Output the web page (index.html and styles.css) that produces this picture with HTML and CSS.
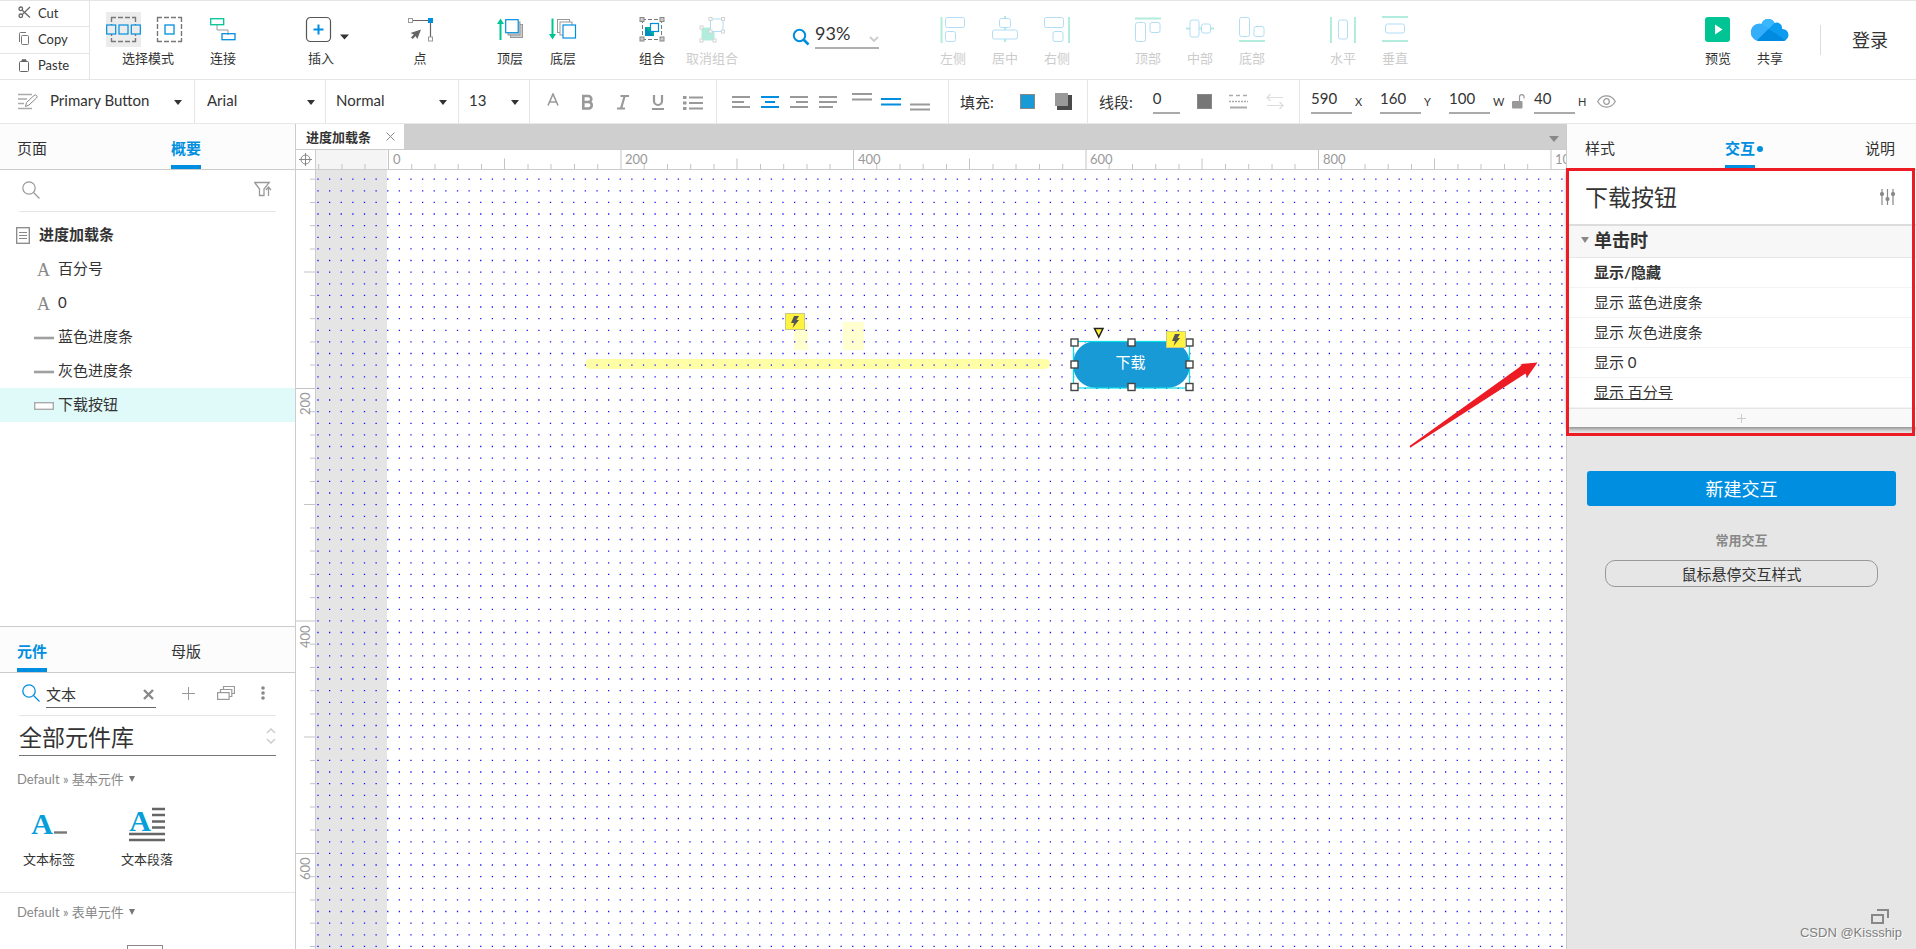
FILE: index.html
```html
<!DOCTYPE html>
<html lang="zh-CN">
<head>
<meta charset="utf-8">
<title>进度加载条</title>
<link rel="stylesheet" href="styles.css">
</head>
<body>
<div class="app">
  <header class="toolbar">
    <div class="clipboard">
      <button class="clip"><svg width="13" height="13" viewBox="0 0 13 13" fill="none" stroke="#666" stroke-width="1.3"><circle cx="2.8" cy="2.8" r="1.8"/><circle cx="2.8" cy="9.8" r="1.8"/><path d="M4.2 4.2 12 11.5M4.2 8.6 12 1"/></svg><span>Cut</span></button>
      <button class="clip"><svg width="13" height="13" viewBox="0 0 13 13" fill="none" stroke="#777"><path d="M1.5 10V1.5a1 1 0 0 1 1-1H8"/><rect x="3.5" y="3.5" width="7" height="9" rx="1"/></svg><span>Copy</span></button>
      <button class="clip"><svg width="13" height="13" viewBox="0 0 13 13" fill="none" stroke="#666"><rect x="1.5" y="2.5" width="9" height="10" rx="1"/><path d="M4 2.5V.8h4v1.7z" fill="#666"/></svg><span>Paste</span></button>
    </div>
    <button class="tool tool-select">
      <span class="mode-pair">
        <svg class="mode-active" width="35" height="35" viewBox="0 0 35 35" fill="none"><path d="M5 5.500h25M5 29.500h25M5.500 5v25M29.500 5v25" stroke="#777" stroke-width="1.400" stroke-dasharray="5 2"/><g stroke="#008fe0" fill="#ececec" stroke-width="1.200"><rect x=".7" y="13" width="9" height="9"/><rect x="13" y="13" width="9" height="9"/><rect x="25.300" y="13" width="9" height="9"/></g></svg>
        <svg width="35" height="35" viewBox="0 0 35 35" fill="none"><path d="M5 5.500h25M5 29.500h25M5.500 5v25M29.500 5v25" stroke="#777" stroke-width="1.400" stroke-dasharray="5 2"/><rect x="13" y="13" width="9" height="9" stroke="#008fe0" stroke-width="1.300"/></svg>
      </span>
      <span>选择模式</span>
    </button>
    <button class="tool tool-connect"><svg width="26" height="35" viewBox="0 0 26 35" fill="none"><path d="M7 13v5h11v5" stroke="#999"/><rect x=".7" y="6.700" width="13" height="6" stroke="#00c493" stroke-width="1.300"/><rect x="12" y="21.700" width="13" height="6" stroke="#008fe0" stroke-width="1.300"/></svg><span>连接</span></button>
    <button class="tool tool-insert"><svg width="58" height="35" viewBox="0 0 58 35" fill="none"><rect x="14.500" y="5.500" width="24" height="24" rx="4" stroke="#555" stroke-width="1.200"/><path d="M26.500 12.500v10M21.500 17.500h10" stroke="#008fe0" stroke-width="2"/><path d="M48 22.500h9l-4.500 5z" fill="#333"/></svg><span>插入</span></button>
    <button class="tool tool-point"><svg width="27" height="35" viewBox="0 0 27 35" fill="none"><path d="M5 8.500h18.500V26" stroke="#666" stroke-width="1.200"/><rect x="1.500" y="6.500" width="4" height="4" stroke="#999" fill="#fff"/><rect x="21.500" y="25" width="4" height="4" stroke="#999" fill="#fff"/><rect x="21" y="6" width="5" height="5" fill="#008fe0"/><path d="M14 17.500 3.500 21l3.300 1.600L4 25.500 5.800 27l2.700-3 1.800 3z" fill="#666"/></svg><span>点</span></button>
    <button class="tool tool-front"><svg width="27" height="35" viewBox="0 0 27 35"><path d="M3.500 28V10" stroke="#00c493" stroke-width="2"/><path d="M0 12 3.500 6.500 7 12z" fill="#00c493"/><rect x="13.500" y="12.500" width="12" height="13" fill="#ccc" stroke="#999"/><rect x="11" y="10" width="12" height="13" fill="#ccc" stroke="#999"/><rect x="8.700" y="7.700" width="12.500" height="13" fill="#fff" stroke="#008fe0" stroke-width="1.200"/></svg><span>顶层</span></button>
    <button class="tool tool-back"><svg width="28" height="35" viewBox="0 0 28 35"><path d="M3.500 6.500V24" stroke="#00c493" stroke-width="2"/><path d="M0 22 3.500 27.500 7 22z" fill="#00c493"/><rect x="8.500" y="7.500" width="12" height="13" fill="#fff" stroke="#999"/><rect x="11" y="10" width="12" height="13" fill="#fff" stroke="#999"/><rect x="14" y="13" width="12.500" height="13" fill="#fff" stroke="#008fe0" stroke-width="1.200"/></svg><span>底层</span></button>
    <button class="tool tool-group"><svg width="26" height="35" viewBox="0 0 26 35" fill="none"><path d="M3 7.500h20M3 27.500h20M3.500 7v20M22.500 7v20" stroke="#777" stroke-dasharray="4 2"/><g fill="#ccc" stroke="#888"><rect x="1" y="5.500" width="4" height="4"/><rect x="21" y="5.500" width="4" height="4"/><rect x="1" y="25" width="4" height="4"/><rect x="21" y="25" width="4" height="4"/></g><rect x="6" y="15" width="9" height="9" fill="#00b48f"/><path d="M6 24h9l-9-9z" fill="#008fc0"/><rect x="11.500" y="11.500" width="8" height="8" fill="#fff" stroke="#008fe0" stroke-width="1.200"/></svg><span>组合</span></button>
    <button class="tool tool-ungroup" disabled><svg width="26" height="35" viewBox="0 0 26 35" fill="none"><rect x="2.500" y="15.500" width="13" height="13" fill="#b2ecdd"/><rect x="11.500" y="7" width="12.500" height="12.500" fill="#fff" stroke="#b2ddf6"/><g fill="#fff" stroke="#d4d4d4"><rect x="10" y="5.500" width="3" height="3"/><rect x="22.500" y="5.500" width="3" height="3"/><rect x="22.500" y="18" width="3" height="3"/><rect x="10" y="18" width="3" height="3"/><rect x="1" y="14" width="3" height="3"/><rect x="1" y="27" width="3" height="3"/><rect x="14" y="27" width="3" height="3"/></g></svg><span>取消组合</span></button>
    <label class="zoom"><svg width="18" height="18" viewBox="0 0 18 18" fill="none" stroke="#008fe0"><circle cx="7.500" cy="7.500" r="5.700" stroke-width="2"/><path d="m11.500 11.500 5 5" stroke-width="2.600"/></svg>
      <span class="zoom-field"><input class="zoom-input" value="93%" aria-label="缩放"><svg width="10" height="6" viewBox="0 0 10 6" fill="none" stroke="#ccc" stroke-width="1.800"><path d="m1 1 4 4 4-4"/></svg></span></label>
    <div class="tool-set set-align-x">
      <button class="tool" disabled><svg width="26" height="35" viewBox="0 0 26 35" fill="none" stroke="#b2ddf6"><path d="M1.500 5v26" stroke="#b2ecdd" stroke-width="2"/><rect x="5.500" y="5.500" width="19" height="10" rx="2"/><rect x="5.500" y="19.500" width="10" height="10" rx="2"/></svg><span>左侧</span></button>
      <button class="tool" disabled><svg width="26" height="35" viewBox="0 0 26 35" fill="none" stroke="#b2ddf6"><path d="M13 4v3M13 15v3M13 27v3" stroke="#b2ecdd" stroke-width="2"/><rect x="7.500" y="6.500" width="11" height="9" rx="2"/><rect x=".5" y="18" width="25" height="9" rx="2"/></svg><span>居中</span></button>
      <button class="tool" disabled><svg width="26" height="35" viewBox="0 0 26 35" fill="none" stroke="#b2ddf6"><path d="M25 5v26" stroke="#b2ecdd" stroke-width="2"/><rect x=".5" y="5.500" width="19" height="10" rx="2"/><rect x="9" y="19.500" width="10" height="10" rx="2"/></svg><span>右侧</span></button>
    </div>
    <div class="tool-set">
      <button class="tool" disabled><svg width="26" height="35" viewBox="0 0 26 35" fill="none" stroke="#b2ddf6"><path d="M0 6.500h26" stroke="#b2ecdd" stroke-width="2"/><rect x=".5" y="10.500" width="10" height="19" rx="2"/><rect x="15" y="10.500" width="10" height="10" rx="2"/></svg><span>顶部</span></button>
      <button class="tool" disabled><svg width="28" height="35" viewBox="0 0 28 35" fill="none" stroke="#b2ddf6"><path d="M0 16.500h4M13 16.500h3M25 16.500h3" stroke="#b2ecdd" stroke-width="2"/><rect x="4" y="8" width="9" height="17" rx="2"/><rect x="15.500" y="12" width="9" height="9" rx="2"/></svg><span>中部</span></button>
      <button class="tool" disabled><svg width="26" height="35" viewBox="0 0 26 35" fill="none" stroke="#b2ddf6"><path d="M0 29h26" stroke="#b2ecdd" stroke-width="2"/><rect x=".5" y="5.500" width="10" height="19" rx="2"/><rect x="15" y="14.500" width="10" height="10" rx="2"/></svg><span>底部</span></button>
    </div>
    <div class="tool-set">
      <button class="tool" disabled><svg width="28" height="35" viewBox="0 0 28 35" fill="none" stroke="#b2ddf6"><path d="M2 5v26M26 5v26" stroke="#b2ecdd" stroke-width="2"/><rect x="9.500" y="8" width="9" height="19" rx="2"/></svg><span>水平</span></button>
      <button class="tool" disabled><svg width="26" height="35" viewBox="0 0 26 35" fill="none" stroke="#b2ddf6"><path d="M0 5h26M0 29h26" stroke="#b2ecdd" stroke-width="2"/><rect x="3.500" y="12" width="19" height="9" rx="2"/></svg><span>垂直</span></button>
    </div>
    <div class="account">
      <button class="tool"><svg width="26" height="35" viewBox="0 0 26 35"><rect y="5" width="25" height="25" rx="3" fill="#00c493"/><path d="M10 12.500v10l7.500-5z" fill="#fff"/></svg><span>预览</span></button>
      <button class="tool"><svg width="38" height="35" viewBox="0 0 38 35"><path d="M8 29A8 8 0 0 1 .5 20.500 8 8 0 0 1 10.500 12 7 7 0 0 1 23.500 11 5.500 5.500 0 0 1 31 17a6 6 0 0 1 6.500 6A6 6 0 0 1 32 29z" fill="#0a9cef"/><path d="M6 28.500A8 8 0 0 1 10.500 12L17.500 17z" fill="#34aefb"/><path d="M10.500 12a7 7 0 0 1 13-1l-6 6z" fill="#3ab8ff"/><path d="M6 28.600 17.500 17 35 28.200 32 29H8z" fill="#008be0"/></svg><span>共享</span></button>
      <a class="login" href="#">登录</a>
    </div>
  </header>

  <div class="format">
    <div class="cell cell-style"><svg width="20" height="17" viewBox="0 0 20 17" fill="none" stroke="#aaa" stroke-width="1.300"><path d="M0 1.500h14M0 6h9M0 10.500h6M0 15.500h14"/><path d="m7.500 13.500 1-4L16 2.500a1.500 1.500 0 0 1 2.500 2.500L11 12z" stroke="#888" stroke-width="1"/></svg><select class="pick" aria-label="样式"><option>Primary Button</option></select><i class="caret"></i></div>
    <div class="cell cell-font"><select class="pick" aria-label="字体"><option>Arial</option></select><i class="caret"></i></div>
    <div class="cell cell-weight"><select class="pick" aria-label="字重"><option>Normal</option></select><i class="caret"></i></div>
    <div class="cell cell-size"><select class="pick" aria-label="字号"><option>13</option></select><i class="caret"></i></div>
    <div class="cell cell-text">
      <button class="fmt" aria-label="文字颜色"><svg width="14" height="18" viewBox="0 0 14 18" fill="none" stroke="#999" stroke-width="1.600"><path d="M2 12.500 7 1l5 11.500M3.800 9h6.400"/></svg></button>
      <button class="fmt" aria-label="粗体"><svg width="14" height="18" viewBox="0 0 14 18" fill="none" stroke="#999" stroke-width="2.600"><path d="M2.300 3h5a3 3 0 0 1 0 6H2.300zM2.300 9h5.700a3.300 3.300 0 0 1 0 6.500H2.300z"/></svg></button>
      <button class="fmt" aria-label="斜体"><svg width="14" height="18" viewBox="0 0 14 18" fill="none" stroke="#999" stroke-width="2.200"><path d="M4.500 3H13M1 15.500h8M8.700 3 5 15.500"/></svg></button>
      <button class="fmt" aria-label="下划线"><svg width="14" height="18" viewBox="0 0 14 18" fill="none" stroke="#999" stroke-width="2.200"><path d="M3 2v6a4 4 0 0 0 8 0V2M1 16h12"/></svg></button>
      <button class="fmt fmt-list" aria-label="列表"><svg width="20" height="18" viewBox="0 0 20 18" fill="none" stroke="#999" stroke-width="2"><path d="M6 4.500h14M6 10h14M6 15.500h14"/><path d="M0 4.500h3.500M0 10h3.500M0 15.500h3.500" stroke-width="3"/></svg></button>
    </div>
    <div class="cell cell-para">
      <button class="par" aria-label="左对齐"><svg width="18" height="22" viewBox="0 0 18 22" stroke="#999" stroke-width="2"><path d="M0 6h18M0 11h12M0 16h18"/></svg></button>
      <button class="par" aria-label="居中对齐"><svg width="18" height="22" viewBox="0 0 18 22" stroke="#008fe0" stroke-width="2"><path d="M0 6h18M4 11h10M0 16h18"/></svg></button>
      <button class="par" aria-label="右对齐"><svg width="18" height="22" viewBox="0 0 18 22" stroke="#999" stroke-width="2"><path d="M0 6h18M6 11h12M0 16h18"/></svg></button>
      <button class="par" aria-label="两端对齐"><svg width="18" height="22" viewBox="0 0 18 22" stroke="#999" stroke-width="2"><path d="M0 6h18M0 11h18M0 16h14"/></svg></button>
      <button class="par-v par-top" aria-label="顶对齐"><svg width="20" height="22" viewBox="0 0 20 22" stroke="#999" stroke-width="2"><path d="M0 3h20M0 8.500h20"/></svg></button>
      <button class="par-v" aria-label="垂直居中"><svg width="20" height="22" viewBox="0 0 20 22" stroke="#008fe0" stroke-width="2"><path d="M0 8h20M0 13.500h20"/></svg></button>
      <button class="par-v" aria-label="底对齐"><svg width="20" height="22" viewBox="0 0 20 22" stroke="#999" stroke-width="2"><path d="M0 13.500h20M0 18.500h20"/></svg></button>
    </div>
    <div class="cell cell-fill"><span>填充:</span>
      <button class="swatch swatch-fill" aria-label="填充颜色"></button>
      <button class="swatch-shadow" aria-label="阴影"><svg width="17" height="17" viewBox="0 0 17 17"><path d="M2 2h15v15H2z" fill="#4a4a4a"/><path d="M0 0h13v13H0z" fill="#999"/></svg></button></div>
    <div class="cell cell-line"><span>线段:</span><input class="num num-line" value="0" aria-label="线宽"><button class="swatch swatch-line" aria-label="线段颜色"></button>
      <button class="line-kind" aria-label="线型"><svg width="20" height="17" viewBox="0 0 20 17" fill="none" stroke="#aaa" stroke-width="1.500"><path d="M0 2.500h20" stroke-dasharray="4 3"/><path d="M0 8.500h19" stroke-dasharray="2 1"/><path d="M1 14.500h17" stroke-width="2"/></svg></button>
      <button class="line-kind" aria-label="箭头" disabled><svg width="18" height="17" viewBox="0 0 18 17" fill="none" stroke="#ddd" stroke-width="1.200"><path d="M17 4.500H1L4.500 1M1 4.500 4.500 8M1 12.500h16L13.500 9M17 12.500 13.500 16"/></svg></button></div>
    <div class="cell cell-pos">
      <label class="dim"><input class="num" value="590"><span>X</span></label>
      <label class="dim"><input class="num" value="160"><span>Y</span></label>
      <label class="dim dim-w"><input class="num" value="100"><span>W</span></label>
      <button class="lock" aria-label="锁定比例"><svg width="13" height="15" viewBox="0 0 13 15"><rect y="7" width="10.500" height="7.500" rx="1" fill="#999"/><path d="M7.500 7V3a2.300 2.300 0 0 1 4.600 0v1.500" fill="none" stroke="#999" stroke-width="1.200"/></svg></button>
      <label class="dim dim-h"><input class="num" value="40"><span>H</span></label>
      <button class="eye" aria-label="可见性"><svg width="19" height="13" viewBox="0 0 19 13" fill="none" stroke="#999" stroke-width="1.200"><path d="M.7 6.500C5-1 14-1 18.300 6.500 14 14 5 14 .7 6.500z"/><circle cx="9.500" cy="6.500" r="2.800"/></svg></button>
    </div>
  </div>

  <div class="work">
    <aside class="left">
      <section class="outline">
        <nav class="tabs"><button class="tab">页面</button><button class="tab tab-on">概要</button></nav>
        <div class="outline-search"><svg width="18" height="18" viewBox="0 0 18 18" fill="none" stroke="#999" stroke-width="1.200"><circle cx="7" cy="7" r="6.200"/><path d="m11.500 11.500 6 6"/></svg><svg width="18" height="16" viewBox="0 0 18 16" fill="none" stroke="#999" stroke-width="1.300"><path d="M.7 1.500h14.500L10 8v6.500L5.500 14.500V8zM14.500 15V6.500M12 9l2.500-3L17 9"/></svg></div>
        <ul class="tree">
          <li class="node node-page"><svg width="14" height="17" viewBox="0 0 14 17" fill="none" stroke="#888"><rect x=".7" y=".7" width="12.600" height="15.600" stroke-width="1.300"/><path d="M3 5.500h8M3 8.500h8M3 11.500h8"/></svg>进度加载条</li>
          <li class="node"><span class="glyph">A</span>百分号</li>
          <li class="node"><span class="glyph">A</span>0</li>
          <li class="node"><svg width="20" height="10" viewBox="0 0 20 10"><path d="M0 5h20" stroke="#a0a0a0" stroke-width="2.600"/></svg>蓝色进度条</li>
          <li class="node"><svg width="20" height="10" viewBox="0 0 20 10"><path d="M0 5h20" stroke="#a0a0a0" stroke-width="2.600"/></svg>灰色进度条</li>
          <li class="node node-on"><svg width="20" height="10" viewBox="0 0 20 10"><rect x=".7" y="1.700" width="18.600" height="6.600" fill="#fff" stroke="#aaa" stroke-width="1.400"/></svg>下载按钮</li>
        </ul>
      </section>
      <section class="library">
        <nav class="tabs"><button class="tab tab-on">元件</button><button class="tab">母版</button></nav>
        <div class="lib-search"><svg width="18" height="18" viewBox="0 0 18 18" fill="none" stroke="#008fe0" stroke-width="1.300"><circle cx="7" cy="7" r="6.200"/><path d="m11.500 11.500 6 6"/></svg>
          <span class="lib-field"><input class="lib-input" value="文本" aria-label="搜索元件"><button class="plain" aria-label="清除"><svg width="11" height="11" viewBox="0 0 11 11" stroke="#888" stroke-width="2.400"><path d="m1 1 9 9M10 1l-9 9"/></svg></button></span>
          <button class="lib-add" aria-label="添加"><svg width="13" height="13" viewBox="0 0 13 13" stroke="#999"><path d="M6.500 0v13M0 6.500h13"/></svg></button>
          <button class="lib-stack" aria-label="元件库"><svg width="18" height="14" viewBox="0 0 18 14" fill="none" stroke="#999" stroke-width="1.200"><rect x=".6" y="6.600" width="11.500" height="6.800"/><path d="M3.500 6.500v-3h11.300v7h-2.500M6.500 3.500v-3h11v7h-2.500"/></svg></button>
          <button class="lib-more" aria-label="更多"><svg width="4" height="14" viewBox="0 0 4 14" fill="#888"><circle cx="2" cy="2" r="1.800"/><circle cx="2" cy="7" r="1.800"/><circle cx="2" cy="12" r="1.800"/></svg></button></div>
        <div class="lib-pick"><select class="lib-select" aria-label="元件库"><option>全部元件库</option></select><svg width="10" height="16" viewBox="0 0 10 16" fill="none" stroke="#ccc" stroke-width="1.500"><path d="m1 5 4-4 4 4M1 11l4 4 4-4"/></svg></div>
        <h3 class="cat">Default » 基本元件 <i class="cat-caret"></i></h3>
        <div class="widgets">
          <button class="widget"><span class="pic"><b class="big-a big-a-low">A</b><svg width="14" height="36" viewBox="0 0 14 36"><path d="M1 26.500h13" stroke="#777" stroke-width="2.400"/></svg></span><span>文本标签</span></button>
          <button class="widget"><span class="pic pic-para"><b class="big-a">A</b><svg width="36" height="36" viewBox="0 0 36 36"><path d="M23 3h13M23 9h13M23 15.500h13M23 21.500h13M0 28h36M0 34h36" stroke="#666" stroke-width="2.400"/></svg></span><span>文本段落</span></button>
        </div>
        <h3 class="cat cat-next">Default » 表单元件 <i class="cat-caret"></i></h3>
        <div class="widgets widgets-next"><span class="text-field-icon"></span></div>
      </section>
    </aside>

    <main class="stage">
      <div class="docs"><div class="doc">进度加载条<button class="plain" aria-label="关闭"><svg width="9" height="9" viewBox="0 0 9 9" stroke="#888"><path d="m.5.5 8 8M8.500.5l-8 8"/></svg></button></div><i class="docs-caret"></i></div>
      <div class="rule-row">
        <div class="corner"><svg width="13" height="13" viewBox="0 0 13 13" fill="none" stroke="#888"><circle cx="6.500" cy="6.500" r="4.500"/><path d="M6.500 0v13M0 6.500h13"/></svg></div>
        <svg class="rule-x" width="100%" height="19">
          <defs><pattern id="rx" x="72" y="0" width="465" height="19" patternUnits="userSpaceOnUse"><path d="M.5 0v19M233 0v19M116.500 8.500v11M349 8.500v11M23.700 14v5M47 14v5M70.200 14v5M93.500 14v5M140 14v5M163 14v5M186.500 14v5M209.700 14v5M256.200 14v5M279.500 14v5M302.700 14v5M326 14v5M372.500 14v5M395.700 14v5M419 14v5M442 14v5" stroke="#c4c4c4"/></pattern></defs>
          <rect width="71" height="19" fill="#f5f5f5"/><rect width="100%" height="19" fill="url(#rx)"/>
          <g class="rule-text"><text x="77" y="14">0</text><text x="309" y="14">200</text><text x="542" y="14">400</text><text x="774" y="14">600</text><text x="1007" y="14">800</text><text x="1239" y="14">1000</text></g>
        </svg>
      </div>
      <div class="board-row">
        <svg class="rule-y" width="19" height="100%">
          <defs><pattern id="ry" x="0" y="218" width="19" height="465" patternUnits="userSpaceOnUse"><path d="M0 .5h19M0 233h19M8 116.500h11M8 349h11M14 23.700h5M14 47h5M14 70.200h5M14 93.500h5M14 140h5M14 163h5M14 186.500h5M14 209.700h5M14 256.200h5M14 279.500h5M14 302.700h5M14 326h5M14 372.500h5M14 395.700h5M14 419h5M14 442h5" stroke="#c4c4c4"/></pattern></defs>
          <rect width="19" height="100%" fill="url(#ry)"/>
          <g class="rule-text"><text transform="translate(14 245) rotate(-90)">200</text><text transform="translate(14 478) rotate(-90)">400</text><text transform="translate(14 710) rotate(-90)">600</text></g>
        </svg>
        <div class="board">
          <svg class="grid" width="100%" height="100%">
            <defs><pattern id="dots" x="71" y="20" width="93" height="93" patternUnits="userSpaceOnUse"><path d="M.1.8H93M.1 12.400H93M.1 24H93M.1 35.700H93M.1 47.300H93M.1 58.900H93M.1 70.500H93M.1 82.200H93" stroke="#1010ff" stroke-width="1.300" stroke-dasharray="1.300 10.325"/></pattern></defs>
            <rect width="71" height="100%" fill="#e5e5e5"/>
            <rect x="269" y="189" width="465" height="10" rx="5" fill="#ffffa6"/>
            <rect x="478" y="152" width="14" height="28" fill="#ffffcf"/><rect x="527" y="152" width="21" height="28" fill="#ffffcf"/>
            <rect width="100%" height="100%" fill="url(#dots)"/>
            <path d="M1093.500 276 1203 197.500 1206 194.500 1203 194.300 1221.500 192.500 1211 207.500 1209.500 203.500 1094.500 277.500z" fill="#ed1c24"/>
          </svg>
          <span class="bolt bolt-text"><svg width="10" height="12" viewBox="0 0 10 12"><path d="M4 0h5L6.500 4H9L2.500 12 4 7H1z" fill="#555"/></svg></span>
          <button class="shape">下载</button>
          <svg class="selection" width="130" height="70" viewBox="0 0 130 70"><rect x="6.500" y="16.500" width="116" height="46.500" fill="none" stroke="#00e0e6" stroke-width="1.200"/><g fill="#fff" stroke="#444" stroke-width="1.400"><rect x="4" y="14" width="7" height="7"/><rect x="61" y="14" width="7" height="7"/><rect x="119" y="14" width="7" height="7"/><rect x="4" y="36" width="7" height="7"/><rect x="119" y="36" width="7" height="7"/><rect x="4" y="58.500" width="7" height="7"/><rect x="61" y="58.500" width="7" height="7"/><rect x="119" y="58.500" width="7" height="7"/></g><path d="M27.500 3.500h8.500l-4.200 8.500z" fill="#fff33a" stroke="#222" stroke-width="1.500"/></svg>
          <span class="bolt bolt-shape"><svg width="10" height="12" viewBox="0 0 10 12"><path d="M4 0h5L6.500 4H9L2.500 12 4 7H1z" fill="#555"/></svg></span>
        </div>
      </div>
    </main>

    <aside class="right">
      <nav class="tabs tabs-right"><button class="tab">样式</button><button class="tab tab-on tab-dot">交互</button><button class="tab">说明</button></nav>
      <section class="events">
        <header class="target"><h2 class="target-name">下载按钮</h2><button class="plain" aria-label="设置"><svg width="15" height="16" viewBox="0 0 15 16" stroke="#888" stroke-width="1.200" fill="#888"><path d="M2 0v16M7.500 0v16M13 0v16"/><circle cx="2" cy="5" r="1.500"/><circle cx="7.500" cy="10" r="1.500"/><circle cx="13" cy="5" r="1.500"/></svg></button></header>
        <h3 class="event"><i class="event-caret"></i>单击时</h3>
        <ul class="actions">
          <li class="action action-head">显示/隐藏</li>
          <li class="action">显示 蓝色进度条</li>
          <li class="action">显示 灰色进度条</li>
          <li class="action">显示 0</li>
          <li class="action"><a class="action-link" href="#">显示 百分号</a></li>
        </ul>
        <button class="add" aria-label="添加动作"><svg width="9" height="9" viewBox="0 0 9 9" stroke="#ccc"><path d="M4.500 0v9M0 4.500h9"/></svg></button>
        <div class="marker"></div>
      </section>
      <div class="extras">
        <button class="primary">新建交互</button>
        <h4 class="common">常用交互</h4>
        <button class="ghost">鼠标悬停交互样式</button>
      </div>
      <footer class="foot"><svg width="18" height="15" viewBox="0 0 18 15" fill="none" stroke="#888" stroke-width="2"><rect x="1" y="6" width="11" height="8"/><path d="M6 1h11v8"/></svg><span class="credit">CSDN @Kissship</span></footer>
    </aside>
  </div>
</div>
</body>
</html>
```
FILE: styles.css
```css
* { box-sizing: border-box; }
body {
  margin: 0;
  color: #333;
  background: #fff;
  font: 15px/20px Lato, "Noto Sans CJK SC", sans-serif;
}
button, input, select { font: inherit; color: inherit; margin: 0; padding: 0; border: 0; background: none; }
h2, h3, h4, ul { margin: 0; padding: 0; font-weight: normal; list-style: none; }
svg { display: block; flex: none; }
a { color: inherit; text-decoration: none; }

.app { display: flex; flex-direction: column; height: 100vh; overflow: hidden; }

/* main toolbar */
.toolbar { display: flex; height: 80px; flex: none; border-top: 1px solid #e5e5e5; border-bottom: 1px solid #e5e5e5; }
.clipboard { display: flex; flex-direction: column; width: 90px; border-right: 1px solid #e5e5e5; }
.clip { display: flex; flex: 1; align-items: center; gap: 7px; padding: 0 0 2px 18px; font-size: 13px; line-height: 16px; }
.clip + .clip { border-top: 1px solid #e5e5e5; }
.tool { display: flex; flex-direction: column; align-items: center; width: 52px; padding-top: 11px; gap: 2px; font-size: 13px; line-height: 18px; white-space: nowrap; }
.tool:disabled { color: #ccc; }
.tool-select { width: 84px; margin-left: 16px; }
.mode-pair { display: flex; gap: 11px; align-self: flex-start; }
.mode-active { background: #ececec; }
.tool-connect { margin-left: 7px; }
.tool-insert { width: 58px; margin-left: 43px; }
.tool-point { margin-left: 44px; }
.tool-front { margin-left: 38px; }
.tool-back { margin-left: 1px; }
.tool-group { margin-left: 37px; }
.tool-ungroup { margin-left: 8px; }
.zoom { display: flex; gap: 5px; margin-left: 54px; padding-top: 18px; align-self: flex-start; }
.zoom > svg { margin-top: 9px; }
.zoom-field { display: flex; align-items: center; width: 64px; height: 30px; border-bottom: 2px solid #b0b0b0; }
.zoom-field svg { margin-top: 12px; }
.zoom-input { width: 54px; font-size: 18px; line-height: 28px; }
.tool-set { display: flex; margin-left: 39px; }
.set-align-x { margin-left: 48px; }
.account { display: flex; margin-left: auto; padding-right: 28px; }
.login { align-self: center; margin-left: 24px; padding-left: 31px; border-left: 1px solid #ddd; font-size: 18px; line-height: 30px; }

/* format bar */
.format { display: flex; height: 44px; flex: none; border-bottom: 1px solid #e8e8e8; }
.cell { display: flex; align-items: center; border-right: 1px solid #e5e5e5; }
.pick { flex: 1; min-width: 0; appearance: none; outline: 0; height: 30px; margin-bottom: 4px; }
.caret { border: 4px solid transparent; border-top: 5px solid #333; border-bottom: 0; margin-top: 2px; }
.cell-style { width: 195px; padding: 0 12px 0 18px; gap: 12px; }
.cell-font { width: 131px; padding: 0 10px 0 12px; }
.cell-weight { width: 133px; padding: 0 11px 0 10px; }
.cell-size { width: 71px; padding: 0 10px; }
.cell-text { width: 187px; padding-left: 16px; gap: 21px; }
.fmt-list { margin-left: -3px; }
.cell-para { width: 232px; padding-left: 15px; }
.par { margin-right: 11px; }
.par-top { margin-left: 4px; }
.par-v { margin-right: 9px; }
.cell-fill { width: 139px; padding-left: 11px; }
.swatch { width: 15px; height: 15px; border: 1px solid #888; }
.swatch-fill { background: #189ad6; margin-left: auto; margin-right: 20px; }
.swatch-shadow { margin-right: 15px; }
.cell-line { width: 212px; padding-left: 11px; gap: 17px; }
.swatch-line { background: #777; }
.num { width: 41px; height: 25px; padding-bottom: 5px; border-bottom: 2px solid #aaa; }
.num-line { width: 27px; margin-left: 3px; }
.cell-pos { border-right: 0; padding-left: 11px; }
.dim { display: flex; align-items: center; gap: 3px; width: 69px; font-size: 11px; }
.dim .num { font-size: 15px; }
.dim-w { width: 54px; }
.lock { margin: 0 9px; }
.dim-h { width: 50px; }
.eye { margin-left: 13px; }

/* three-column work area */
.work { display: flex; flex: 1; min-height: 0; }
.left { display: flex; flex-direction: column; width: 296px; flex: none; border-right: 1px solid #ccc; }
.tabs { display: flex; height: 46px; flex: none; background: #fcfcfc; border-bottom: 1px solid #ccc; padding: 0 17px; gap: 124px; }
.tab { height: 45px; padding-top: 7px; border-bottom: 4px solid transparent; line-height: 34px; }
.tab-on { color: #008fe0; font-weight: 700; border-bottom-color: #008fe0; }
.outline { flex: 1; min-height: 0; }
.outline-search { display: flex; justify-content: space-between; margin: 0 19px; height: 42px; padding: 11px 4px 0 3px; border-bottom: 1px solid #e5e5e5; }
.tree { padding-top: 6px; }
.node { display: flex; align-items: center; gap: 4px; height: 34px; padding: 0 0 2px 34px; }
.node > svg, .glyph { margin-top: 3px; }
.node-page { padding-left: 16px; gap: 9px; font-weight: 700; }
.node-on { background: #e0f9f9; }
.glyph { width: 20px; padding-left: 3px; color: #888; font: 18px/20px "Liberation Serif", serif; }
.library { height: 323px; flex: none; border-top: 1px solid #ccc; overflow: hidden; }
.lib-search { display: flex; align-items: center; height: 43px; margin: 0 19px; padding: 0 3px 2px; border-bottom: 1px solid #e5e5e5; }
.lib-add { margin-left: 26px; }
.lib-stack { margin-left: 22px; }
.lib-more { margin-left: 26px; }
.lib-field { display: flex; align-items: center; width: 110px; height: 26px; margin: 4px 0 0 6px; padding-right: 2px; border-bottom: 1px solid #666; }
.lib-input { flex: 1; min-width: 0; height: 24px; padding-bottom: 2px; }
.lib-pick { display: flex; align-items: center; height: 40px; margin: 0 19px; border-bottom: 1px solid #777; }
.lib-select { flex: 1; appearance: none; font-size: 23px; line-height: 34px; height: 36px; padding-top: 2px; }
.cat { display: flex; align-items: center; gap: 5px; height: 46px; padding-left: 17px; font-size: 13px; color: #888; }
.cat-caret { border: 3px solid transparent; border-top: 6px solid #777; border-bottom: 0; }
.widgets { display: flex; gap: 46px; height: 91px; padding: 4px 0 0 23px; border-bottom: 1px solid #e5e5e5; }
.widget { display: flex; flex-direction: column; align-items: center; gap: 8px; width: 52px; font-size: 13px; line-height: 18px; }
.pic { display: grid; grid-template-columns: 22px 14px; height: 36px; }
.pic-para > * { grid-area: 1 / 1; }
.big-a { height: 30px; color: #069fd9; font: bold 30px/30px "Liberation Serif", serif; }
.big-a-low { margin-top: 3px; }
.cat-next { height: 38px; }
.widgets-next { padding-top: 14px; border-bottom: 0; }
.text-field-icon { width: 36px; height: 24px; margin-left: 104px; border: 1px solid #888; }

/* canvas */
.stage { display: flex; flex-direction: column; flex: 1; min-width: 0; }
.docs { display: flex; justify-content: space-between; height: 26px; flex: none; background: #cfcfcf; border-bottom: 1px solid #ccc; }
.doc { display: flex; align-items: center; gap: 15px; padding: 0 9px 0 10px; background: #fff; font-size: 13px; font-weight: 700; line-height: 20px; }
.docs-caret { align-self: center; margin: 5px 7px 0 0; border: 5px solid transparent; border-top: 6px solid #888; border-bottom: 0; }
.rule-row { display: flex; height: 20px; flex: none; border-bottom: 1px solid #ccc; }
.corner { display: grid; place-items: center; width: 20px; flex: none; border-right: 1px solid #ccc; }
.rule-x { flex: 1; min-width: 0; }
.rule-text { fill: #999; font-size: 13px; }
.board-row { display: flex; flex: 1; min-height: 0; }
.rule-y { height: 100%; }
.board { position: relative; flex: 1; min-width: 0; overflow: hidden; border-left: 1px solid #ccc; }
.grid { position: absolute; inset: 0; }
.bolt { position: absolute; display: grid; place-items: center; width: 20px; height: 17px; background: #fff33f; border: 1px solid #c8c88a; }
.bolt-text { left: 469px; top: 143px; }
.bolt-shape { left: 850px; top: 161px; }
.shape { position: absolute; left: 757px; top: 171px; width: 117px; height: 47px; padding: 0 2px 5px 0; border-radius: 23px; background: #189ad6; color: #fff; }
.selection { position: absolute; left: 751px; top: 155px; }

/* interactions */
.right { display: flex; flex-direction: column; width: 350px; flex: none; background: #e6e6e6; border-left: 1px solid #ccc; }
.tabs-right { padding: 0 21px 0 18px; justify-content: space-between; gap: 0; }
.tab-dot { position: relative; }
.tab-dot::after { content: ""; position: absolute; left: 32px; top: 22px; width: 6px; height: 6px; border-radius: 50%; background: #008fe0; }
.events { position: relative; background: #fff; box-shadow: 0 2px 4px #888; }
.target { display: flex; align-items: center; justify-content: space-between; height: 54px; padding: 0 21px 1px 18px; }
.target-name { font-size: 23px; line-height: 34px; }
.event { display: flex; align-items: center; gap: 5px; height: 34px; padding: 0 0 3px 14px; border-top: 2px solid #ddd; border-bottom: 1px solid #e8e8e8; background: #f7f7f7; font-size: 18px; font-weight: 700; line-height: 30px; }
.event-caret { border: 4px solid transparent; border-top: 6px solid #888; border-bottom: 0; }
.action { height: 30px; padding-left: 27px; line-height: 28px; border-bottom: 1px solid #f3f3f3; }
.action-head { font-weight: 700; }
.action-link { text-decoration: underline; }
.add { display: grid; place-items: center; width: 100%; height: 19px; background: #f9f9f9; border-top: 1px solid #e5e5e5; }
.marker { position: absolute; inset: -2px 1px -9px -1px; border: 3px solid #ed1c24; pointer-events: none; }
.extras { display: flex; flex-direction: column; align-items: center; padding: 44px 20px 0 20px; }
.primary { width: 100%; height: 35px; border-radius: 3px; background: #008fe0; color: #fff; font-size: 18px; line-height: 30px; }
.common { margin-top: 24px; font-size: 13px; font-weight: 700; color: #888; }
.ghost { width: 273px; height: 27px; margin-top: 10px; border: 1px solid #999; border-radius: 10px; }
.foot { display: flex; flex-direction: column; align-items: flex-end; margin-top: auto; padding: 0 14px 7px 0; }
.foot svg { margin-right: 13px; }
.credit { font: 13px/18px "Liberation Sans", sans-serif; color: #808080; text-shadow: 1px 1px 0 #fff; }
```
